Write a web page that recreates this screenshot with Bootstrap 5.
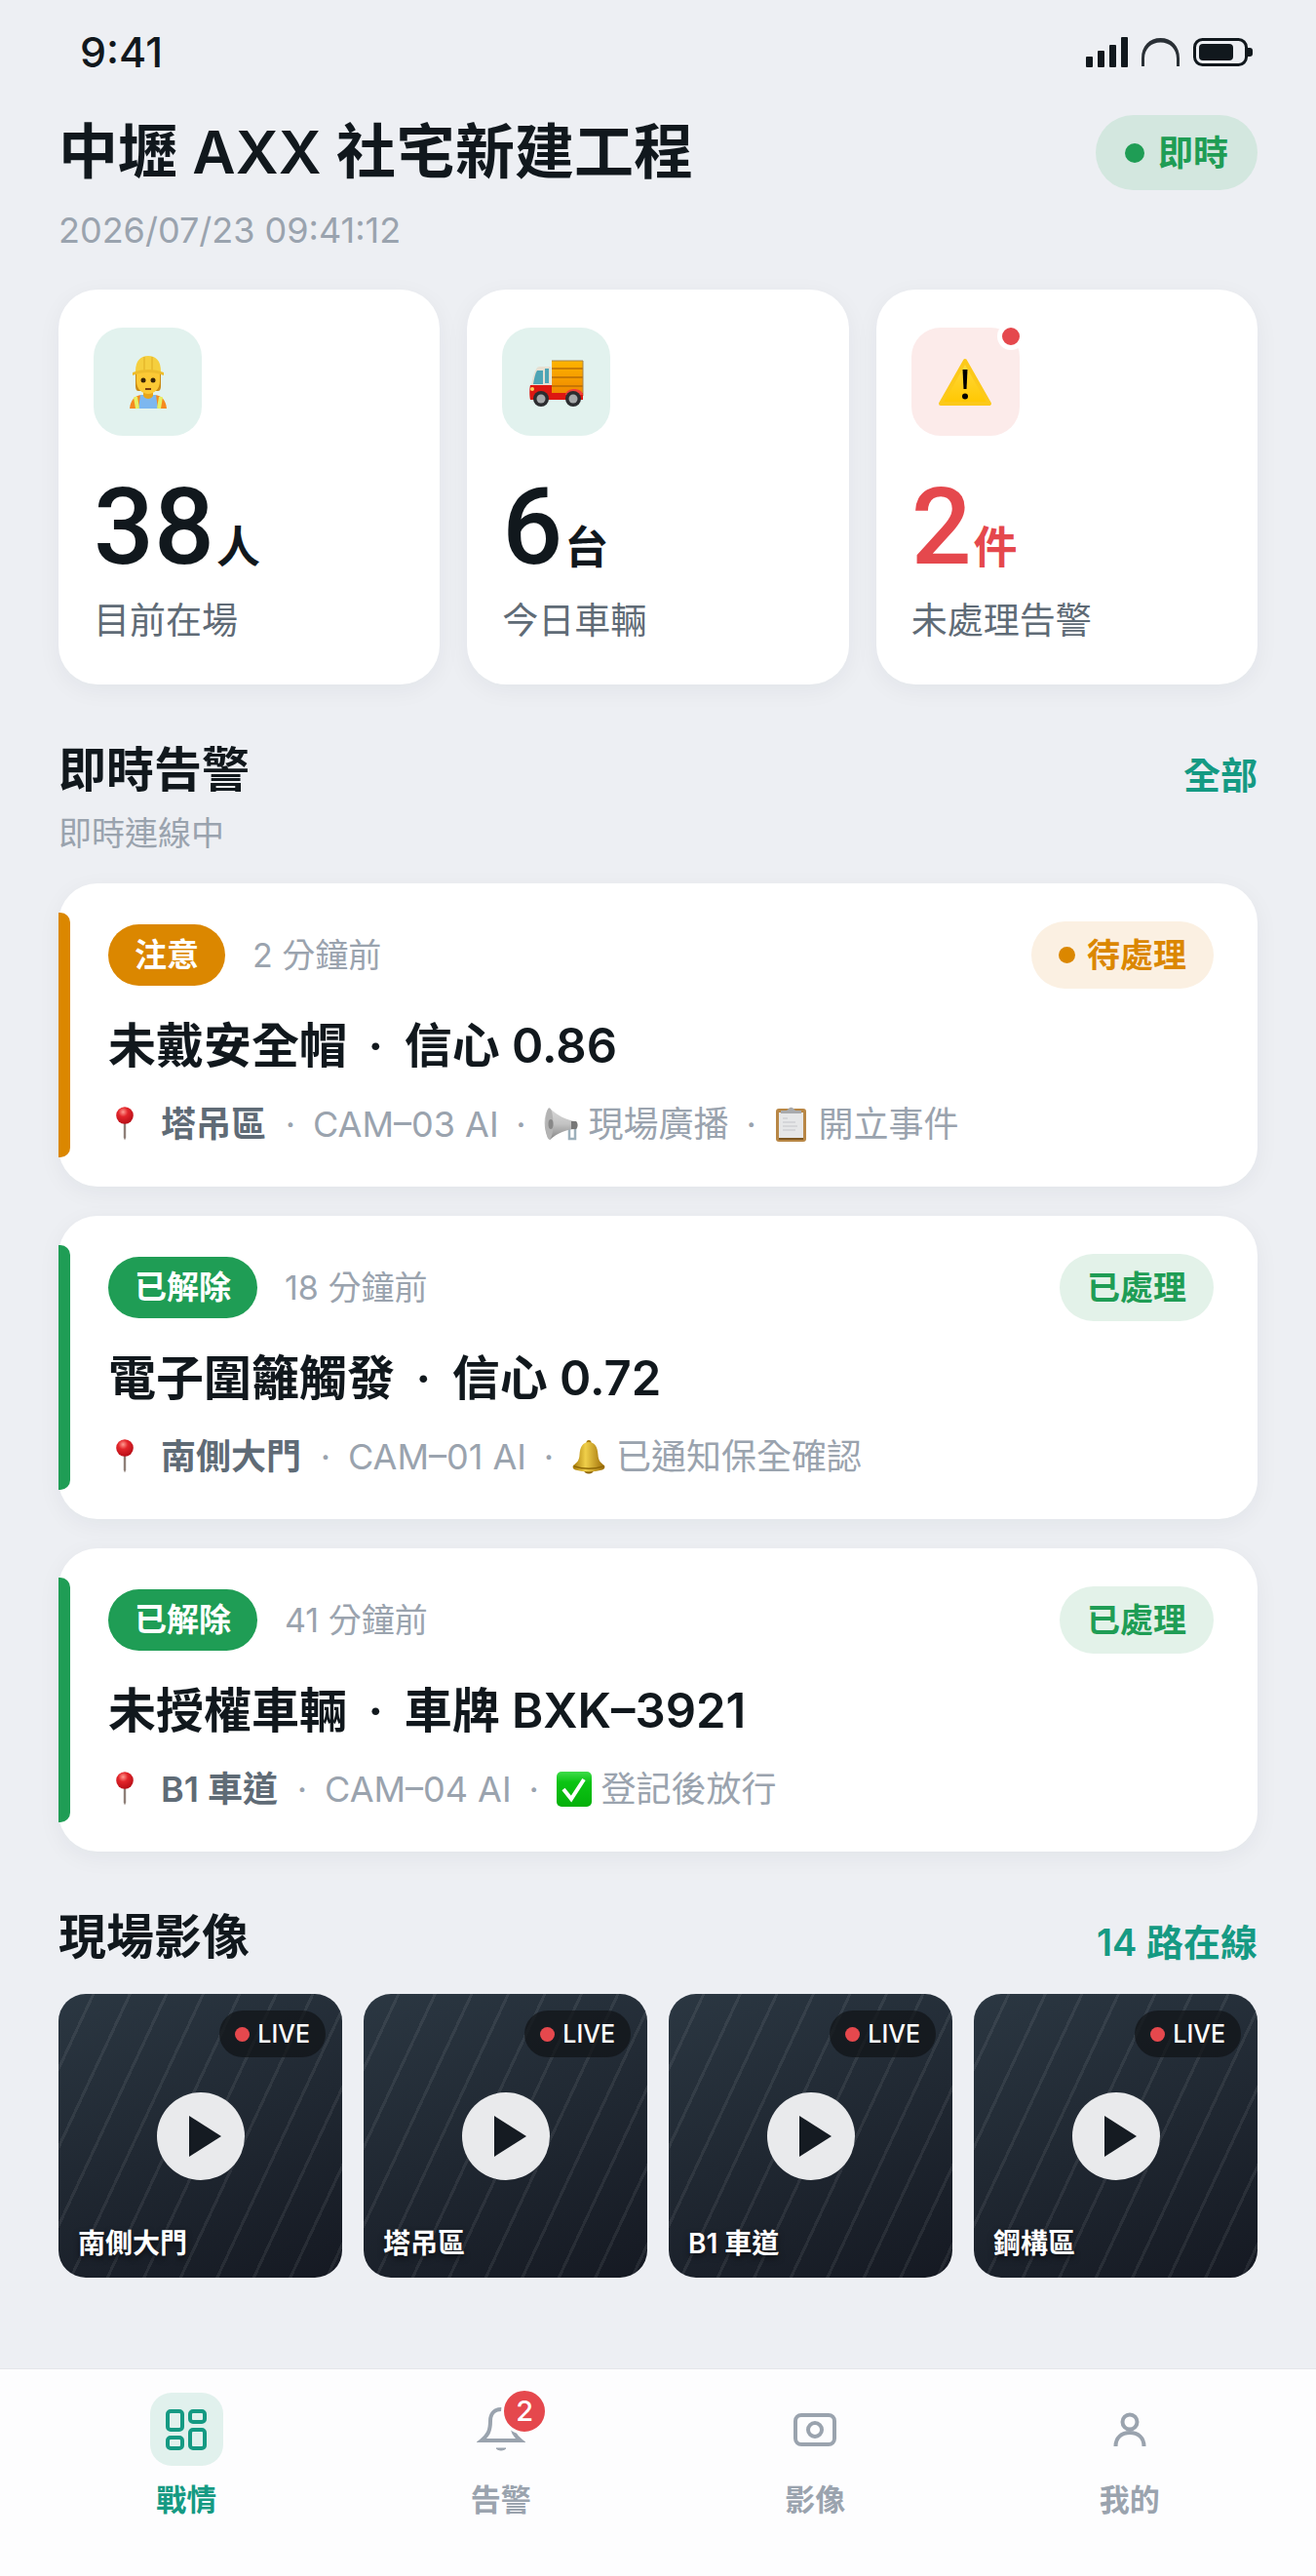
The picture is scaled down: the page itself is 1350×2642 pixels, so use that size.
<!DOCTYPE html>
<html lang="zh-Hant">
<head>
    <meta charset="UTF-8">
    <meta name="viewport" content="width=device-width, initial-scale=1.0">
    <title>中壢 AXX 社宅新建工程</title>
    <link href="https://cdn.jsdelivr.net/npm/bootstrap@5.3.0/dist/css/bootstrap.min.css" rel="stylesheet">
    <style>
        :root {
            --ink: #11181d;
            --slate: #5f6b76;
            --mist: #9aa3ae;
            --teal: #159a83;
            --green: #1f9d55;
            --amber: #db8700;
            --red: #e5484d;
        }
        body {
            font-family: Inter, "Noto Sans CJK TC", sans-serif;
            background: #edeff3;
            color: var(--ink);
            font-size: 34px;
            line-height: 50px;
        }
        a { text-decoration: none; }
        .page-pad { padding-left: 60px; padding-right: 60px; }

        /* status bar */
        .status-bar { padding: 24px 64px 0 82px; height: 102px; }
        .clock { font-size: 43px; line-height: 58px; font-weight: 500; }
        .status-icons { gap: 14px; height: 58px; }

        /* header */
        .site-title { font-size: 61px; line-height: 77px; font-weight: 600; }
        .site-time { font-size: 36px; color: var(--mist); }
        .live-pill {
            height: 77px; padding: 0 30px; gap: 14px;
            font-size: 36px; font-weight: 600;
            color: var(--green); background: #d3e7df;
        }
        .bullet { width: 17px; height: 17px; border-radius: 50%; background: currentColor; flex: none; }
        .live-pill .bullet { width: 20px; height: 20px; }

        /* stat cards */
        .stat-grid, .cam-grid { display: grid; }
        .stat-grid { grid-template-columns: repeat(3, 1fr); gap: 28px; margin-top: 36px; }
        .panel { background: #fff; border-radius: 40px; box-shadow: 0 6px 24px rgba(20, 30, 50, .05); }
        .stat { padding: 39px 36px 40px; }
        .stat-icon { width: 111px; height: 111px; border-radius: 30px; background: #e2f2ee; }
        .stat-icon.danger { background: #fcebea; }
        .stat-icon svg { width: 58px; height: 58px; }
        .alert-dot {
            top: -5px; right: -5px; width: 28px; height: 28px;
            border: 5px solid #fff; border-radius: 50%; background: var(--red);
        }
        .stat-value {
            height: 108px; margin-top: 40px; gap: 2px;
            font-family: Roboto, "Noto Sans CJK TC", sans-serif;
            font-size: 109px; line-height: 108px; font-weight: 500;
        }
        .stat-value small { font-size: 45px; line-height: 50px; font-weight: 600; }
        .stat-value.danger { color: var(--red); }
        .stat-label { margin-top: 17px; font-size: 37px; color: var(--slate); }

        /* sections */
        .section-head { margin-top: 58px; }
        .section-title { font-size: 49px; line-height: 60px; font-weight: 600; }
        .section-link { margin-top: 10px; font-size: 38px; font-weight: 600; color: var(--teal); }
        .section-note { margin-top: 10px; color: var(--mist); }
        .muted { color: var(--mist); }

        /* alert cards */
        .alarm-list { gap: 30px; margin-top: 26px; }
        .alarm { padding: 39px 45px 39px 51px; --tone: var(--green); --tint: #e3f2e9; }
        .alarm.warn { --tone: var(--amber); --tint: #fbf0e2; }
        .alarm::before {
            content: ""; position: absolute; left: 0; top: 30px; bottom: 30px;
            width: 12px; border-radius: 0 10px 10px 0; background: var(--tone);
        }
        .alarm-top { height: 69px; gap: 28px; }
        .tag { height: 63px; padding: 0 27px; font-size: 33px; line-height: 63px; font-weight: 600; color: #fff; background: var(--tone); }
        .state { height: 69px; padding: 0 28px; gap: 12px; font-weight: 600; color: var(--tone); background: var(--tint); }
        .alarm-title { margin-top: 24px; font-size: 49px; line-height: 70px; font-weight: 600; }
        .sep { display: inline-block; width: 34px; text-align: center; }
        .alarm-meta { margin-top: 20px; gap: 10px; font-size: 36px; color: var(--mist); }
        .alarm-meta strong { font-weight: 600; color: var(--slate); margin-right: 2px; }
        .alarm-meta .sep { width: 26px; }
        .alarm-meta svg { width: 36px; height: 36px; }
        .alarm-meta svg.pin { width: 44px; }

        /* cameras */
        .cam-grid { grid-template-columns: repeat(4, 1fr); gap: 22px; margin-top: 28px; }
        .cam {
            aspect-ratio: 1; border-radius: 28px; color: #fff;
            background:
                repeating-linear-gradient(115deg, transparent 0 31px, rgba(255, 255, 255, .07) 31px 34px),
                linear-gradient(160deg, #2b3742, #151922);
        }
        .cam-live {
            top: 17px; right: 17px; height: 48px; padding: 0 16px; gap: 8px;
            font-size: 25px; font-weight: 500; background: rgba(15, 18, 22, .7);
        }
        .cam-live .bullet { width: 15px; height: 15px; color: var(--red); }
        .cam-play { width: 90px; height: 90px; background: #e9eaec; }
        .cam-name { left: 20px; bottom: 15px; font-size: 28px; line-height: 40px; font-weight: 600; text-shadow: 0 3px 6px rgba(0, 0, 0, .6); }

        /* tab bar */
        .tabs { height: 213px; padding: 24px 30px 0; background: #fdfdfe; border-top: 1px solid #e4e6ea; }
        .tab { color: var(--mist); font-size: 31px; font-weight: 600; gap: 10px; }
        .tab.active { color: var(--teal); }
        .tab-icon { width: 75px; height: 75px; border-radius: 22px; }
        .tab.active .tab-icon { background: #e1f1ed; }
        .tab-count {
            top: -5px; right: -11px; width: 48px; height: 48px;
            border: 3px solid #fdfdfe; border-radius: 50%;
            background: var(--red); color: #fff; font-size: 29px; font-weight: 500; line-height: 42px; text-align: center;
        }
    </style>
</head>
<body class="d-flex flex-column min-vh-100">

    <!-- shared icons -->
    <svg class="position-absolute" width="0" height="0" aria-hidden="true">
        <defs>
            <linearGradient id="gold" x1="0" x2="1"><stop offset="0" stop-color="#a77a08"/><stop offset=".4" stop-color="#f0cf4a"/><stop offset="1" stop-color="#9a6a05"/></linearGradient>
            <linearGradient id="leaf" x1="0" x2="0" y1="0" y2="1"><stop offset="0" stop-color="#3fdc4a"/><stop offset=".3" stop-color="#0cc414"/><stop offset="1" stop-color="#04b00a"/></linearGradient>
            <linearGradient id="horn" x1="0" x2="0" y1="0" y2="1"><stop offset="0" stop-color="#d9d9d9"/><stop offset=".5" stop-color="#c4c4c4"/><stop offset="1" stop-color="#858585"/></linearGradient>
            <linearGradient id="sun" x1="0" x2="0" y1="0" y2="1"><stop offset="0" stop-color="#ffdb43"/><stop offset="1" stop-color="#ffc700"/></linearGradient>
            <linearGradient id="crate" x1="0" x2="0" y1="0" y2="1"><stop offset="0" stop-color="#fdb400"/><stop offset="1" stop-color="#ee8500"/></linearGradient>
            <radialGradient id="ball" cx=".4" cy=".3" r=".7"><stop offset="0" stop-color="#ff9a90"/><stop offset=".4" stop-color="#e3262b"/><stop offset="1" stop-color="#b80e17"/></radialGradient>
        </defs>
        <symbol id="i-pin" viewBox="0 0 44 36">
            <path d="M15.800 15h2.400v16.500l-1.200 3-1.200-3z" fill="#8e7f78"/>
            <circle cx="17" cy="9" r="8.800" fill="url(#ball)"/>
        </symbol>
        <symbol id="i-horn" viewBox="0 0 36 36">
            <path d="M26 20v13h6V19" fill="none" stroke="#9db0bb" stroke-width="2.500"/>
            <path d="M5 1C14 9 23 14 33 15c2 2 2 6 0 8-10 0-19 4-27 11C-1 25-1 9 5 1z" fill="url(#horn)"/>
            <path d="M28 15l5 0c2 2 2 6 0 8h-5z" fill="#777"/>
            <ellipse cx="5.500" cy="17.500" rx="4" ry="16" fill="#b3b3b3"/>
            <ellipse cx="7" cy="18" rx="2.500" ry="5" fill="#888"/>
        </symbol>
        <symbol id="i-board" viewBox="0 0 36 36">
            <rect x="2" y="2" width="31" height="34" rx="3" fill="#b88746"/>
            <rect x="5" y="6" width="25" height="26" fill="#e6e7e8"/>
            <path d="M9 12h5M9 16h13M9 20h15M9 24h13" stroke="#cfd1d4" stroke-width="1.500"/>
            <path d="M7 7V4h6l2-2a3 3 0 0 1 5 0l2 2h6v3z" fill="#a8aaad"/>
            <path d="M5 32h25v2H5z" fill="#7d5722"/>
        </symbol>
        <symbol id="i-bell" viewBox="0 0 36 36">
            <circle cx="18" cy="3.500" r="2.500" fill="#a87c0c"/>
            <ellipse cx="18" cy="32" rx="5" ry="3.500" fill="#8e6406"/>
            <path d="M18 3c6 0 9 5 9.500 13 .3 6 2.500 8 6.500 11 1 1.500 0 4-2 4.500C23 34 13 34 4 31.500c-2-.5-3-3-2-4.500 4-3 6.200-5 6.500-11C9 8 12 3 18 3z" fill="url(#gold)"/>
            <path d="M3 28c10 3 20 3 30 0" fill="none" stroke="#8f6808" stroke-width="1.500"/>
        </symbol>
        <symbol id="i-check" viewBox="0 0 36 36">
            <rect width="36" height="36" rx="5" fill="url(#leaf)"/>
            <path d="M7 18l8 10L28 8" fill="none" stroke="#fff" stroke-width="4"/>
        </symbol>
        <symbol id="i-play" viewBox="0 0 90 90">
            <path d="M33 24v42l33-21z" fill="#151b22"/>
        </symbol>
    </svg>

    <div class="status-bar d-flex justify-content-between align-items-start">
        <span class="clock">9:41</span>
        <div class="status-icons d-flex align-items-center">
            <svg width="44" height="31" viewBox="0 0 44 31" fill="#11181d" aria-hidden="true">
                <rect x="1" y="20" width="7" height="11" rx="1"/><rect x="13" y="14" width="7" height="17" rx="1"/>
                <rect x="25" y="8" width="7" height="23" rx="1"/><rect x="37" y="0" width="7" height="31" rx="1"/>
            </svg>
            <svg width="39" height="29" viewBox="0 0 39 29" aria-hidden="true">
                <path d="M0 29V21C0 8 8 0 19.500 0S39 8 39 21v8h-3v-8C36 11 29 4.500 19.500 4.500S3 11 3 21v8z" fill="#2a3036"/>
            </svg>
            <svg width="62" height="29" viewBox="0 0 62 29" aria-hidden="true">
                <rect x="1.500" y="1.500" width="53" height="26" rx="8" fill="none" stroke="#11181d" stroke-width="3"/>
                <rect x="6" y="6" width="35" height="17" rx="4" fill="#11181d"/>
                <path d="M56 10h2a3 3 0 0 1 3 3v3a3 3 0 0 1-3 3h-2z" fill="#11181d"/>
            </svg>
        </div>
    </div>

    <main class="page-pad">
        <header class="d-flex justify-content-between align-items-start mt-3">
            <div>
                <h1 class="site-title mb-0">中壢 AXX 社宅新建工程</h1>
                <time class="site-time d-block mt-3">2026/07/23 09:41:12</time>
            </div>
            <span class="live-pill rounded-pill d-flex align-items-center"><span class="bullet"></span>即時</span>
        </header>

        <section class="stat-grid">
            <div class="panel stat">
                <div class="stat-icon d-flex align-items-center justify-content-center">
                    <svg viewBox="0 0 58 58" aria-hidden="true">
                        <path d="M10 56c1-9 5-13 12-14h14c7 1 11 5 12 14z" fill="#f58a1f"/>
                        <path d="M21 42h16l2 14H19z" fill="#7db7ef"/>
                        <path d="M16 44l2 12M42 44l-2 12" stroke="#e8ef62" stroke-width="4"/>
                        <path d="M24 36h10v7c-2 4-8 4-10 0z" fill="#e9a61a"/>
                        <path d="M16 18h26v15c0 3-1 5-3 5H19c-2 0-3-2-3-5z" fill="#c98a14"/>
                        <path d="M17 18h24v10c0 8-6 13-12 13s-12-5-12-13z" fill="#fcc935"/>
                        <circle cx="24" cy="27" r="2.500" fill="#3a2508"/><circle cx="34" cy="27" r="2.500" fill="#3a2508"/>
                        <path d="M26 36h6" stroke="#7a3f10" stroke-width="2"/>
                        <path d="M16 18C16 7 21 2 29 2s13 5 13 16z" fill="#f5cf3e"/>
                        <path d="M25 3v14M33 3v14" stroke="#e6b92c" stroke-width="1.500"/>
                        <path d="M13 19c10-4 22-4 32 0v3c-10-4-22-4-32 0z" fill="#eebd2c"/>
                    </svg>
                </div>
                <div class="stat-value d-flex align-items-baseline">38<small>人</small></div>
                <div class="stat-label">目前在場</div>
            </div>
            <div class="panel stat">
                <div class="stat-icon d-flex align-items-center justify-content-center">
                    <svg viewBox="0 0 58 58" aria-hidden="true">
                        <path d="M24 7h32v36H24z" fill="url(#crate)"/>
                        <path d="M24 15h32M24 24h32M24 33h32" stroke="#b96d05" stroke-width="1.500"/>
                        <path d="M24 7h32v36" fill="none" stroke="#a8834a" stroke-width="1"/>
                        <path d="M9 14c1-1 2-1 3-1h11v20H3c1-8 3-15 6-19z" fill="#e6e0d2"/>
                        <path d="M9 17h6v14H5c1-6 2-11 4-14zM17 15h4v15h-4z" fill="#4ea5b5"/>
                        <path d="M2 32h22v8h32v7H2c-1-3-1-12 0-15z" fill="#dd1712"/>
                        <path d="M38 42c1-8 17-8 18 0z" fill="#f0413a"/>
                        <circle cx="13" cy="46" r="8" fill="#2c2d30"/><circle cx="13" cy="46" r="4.500" fill="#a6a8aa"/>
                        <circle cx="46" cy="46" r="8" fill="#2c2d30"/><circle cx="46" cy="46" r="4.500" fill="#a6a8aa"/>
                        <circle cx="4" cy="36" r="2" fill="#ffcf5a"/>
                    </svg>
                </div>
                <div class="stat-value d-flex align-items-baseline">6<small>台</small></div>
                <div class="stat-label">今日車輛</div>
            </div>
            <div class="panel stat">
                <div class="stat-icon danger position-relative d-flex align-items-center justify-content-center">
                    <svg viewBox="0 0 58 58" aria-hidden="true">
                        <path d="M29 7L54 51H4z" fill="url(#sun)" stroke="#fcc91a" stroke-width="4" stroke-linejoin="round"/>
                        <path d="M26.500 16h5l-1 20h-3z"/><circle cx="29" cy="43.500" r="3"/>
                    </svg>
                    <span class="alert-dot position-absolute"></span>
                </div>
                <div class="stat-value danger d-flex align-items-baseline">2<small>件</small></div>
                <div class="stat-label">未處理告警</div>
            </div>
        </section>

        <div class="section-head d-flex justify-content-between">
            <div>
                <h2 class="section-title mb-0">即時告警</h2>
                <div class="section-note">即時連線中</div>
            </div>
            <a class="section-link" href="#">全部</a>
        </div>

        <section class="alarm-list d-grid">
            <article class="panel alarm warn position-relative">
                <div class="alarm-top d-flex align-items-center">
                    <span class="tag rounded-pill">注意</span>
                    <span class="muted">2 分鐘前</span>
                    <span class="state rounded-pill d-flex align-items-center ms-auto"><span class="bullet"></span>待處理</span>
                </div>
                <h3 class="alarm-title mb-0">未戴安全帽 <span class="sep">·</span> 信心 0.86</h3>
                <div class="alarm-meta d-flex align-items-center">
                    <svg class="pin" aria-hidden="true"><use href="#i-pin"/></svg>
                    <strong>塔吊區</strong><span class="sep">·</span><span>CAM–03 AI</span><span class="sep">·</span>
                    <svg aria-hidden="true"><use href="#i-horn"/></svg><span>現場廣播</span><span class="sep">·</span>
                    <svg aria-hidden="true"><use href="#i-board"/></svg><span>開立事件</span>
                </div>
            </article>
            <article class="panel alarm position-relative">
                <div class="alarm-top d-flex align-items-center">
                    <span class="tag rounded-pill">已解除</span>
                    <span class="muted">18 分鐘前</span>
                    <span class="state rounded-pill d-flex align-items-center ms-auto">已處理</span>
                </div>
                <h3 class="alarm-title mb-0">電子圍籬觸發 <span class="sep">·</span> 信心 0.72</h3>
                <div class="alarm-meta d-flex align-items-center">
                    <svg class="pin" aria-hidden="true"><use href="#i-pin"/></svg>
                    <strong>南側大門</strong><span class="sep">·</span><span>CAM–01 AI</span><span class="sep">·</span>
                    <svg aria-hidden="true"><use href="#i-bell"/></svg><span>已通知保全確認</span>
                </div>
            </article>
            <article class="panel alarm position-relative">
                <div class="alarm-top d-flex align-items-center">
                    <span class="tag rounded-pill">已解除</span>
                    <span class="muted">41 分鐘前</span>
                    <span class="state rounded-pill d-flex align-items-center ms-auto">已處理</span>
                </div>
                <h3 class="alarm-title mb-0">未授權車輛 <span class="sep">·</span> 車牌 BXK–3921</h3>
                <div class="alarm-meta d-flex align-items-center">
                    <svg class="pin" aria-hidden="true"><use href="#i-pin"/></svg>
                    <strong>B1 車道</strong><span class="sep">·</span><span>CAM–04 AI</span><span class="sep">·</span>
                    <svg aria-hidden="true"><use href="#i-check"/></svg><span>登記後放行</span>
                </div>
            </article>
        </section>

        <div class="section-head d-flex justify-content-between">
            <h2 class="section-title mb-0">現場影像</h2>
            <a class="section-link" href="#">14 路在線</a>
        </div>

        <section class="cam-grid">
            <div class="cam position-relative d-flex align-items-center justify-content-center">
                <span class="cam-live position-absolute rounded-pill d-flex align-items-center"><span class="bullet"></span>LIVE</span>
                <button class="cam-play btn p-0 border-0 rounded-circle" type="button" aria-label="播放南側大門"><svg width="90" height="90"><use href="#i-play"/></svg></button>
                <span class="cam-name position-absolute">南側大門</span>
            </div>
            <div class="cam position-relative d-flex align-items-center justify-content-center">
                <span class="cam-live position-absolute rounded-pill d-flex align-items-center"><span class="bullet"></span>LIVE</span>
                <button class="cam-play btn p-0 border-0 rounded-circle" type="button" aria-label="播放塔吊區"><svg width="90" height="90"><use href="#i-play"/></svg></button>
                <span class="cam-name position-absolute">塔吊區</span>
            </div>
            <div class="cam position-relative d-flex align-items-center justify-content-center">
                <span class="cam-live position-absolute rounded-pill d-flex align-items-center"><span class="bullet"></span>LIVE</span>
                <button class="cam-play btn p-0 border-0 rounded-circle" type="button" aria-label="播放 B1 車道"><svg width="90" height="90"><use href="#i-play"/></svg></button>
                <span class="cam-name position-absolute">B1 車道</span>
            </div>
            <div class="cam position-relative d-flex align-items-center justify-content-center">
                <span class="cam-live position-absolute rounded-pill d-flex align-items-center"><span class="bullet"></span>LIVE</span>
                <button class="cam-play btn p-0 border-0 rounded-circle" type="button" aria-label="播放鋼構區"><svg width="90" height="90"><use href="#i-play"/></svg></button>
                <span class="cam-name position-absolute">鋼構區</span>
            </div>
        </section>
    </main>

    <nav class="tabs d-flex mt-auto">
        <a class="tab active flex-fill w-25 d-flex flex-column align-items-center" href="#">
            <span class="tab-icon d-flex align-items-center justify-content-center">
                <svg width="42" height="42" viewBox="0 0 42 42" fill="none" stroke="currentColor" stroke-width="4">
                    <rect x="2" y="2" width="15" height="19" rx="3"/><rect x="25" y="2" width="15" height="11" rx="3"/>
                    <rect x="2" y="29" width="15" height="11" rx="3"/><rect x="25" y="21" width="15" height="19" rx="3"/>
                </svg>
            </span>
            戰情
        </a>
        <a class="tab flex-fill w-25 d-flex flex-column align-items-center" href="#">
            <span class="tab-icon position-relative d-flex align-items-center justify-content-center">
                <svg width="50" height="50" viewBox="0 0 50 50" fill="none" stroke="currentColor" stroke-width="4">
                    <path d="M25 4c-7 0-11 5-11 12 0 11-3 15-9 20h40c-6-5-9-9-9-20 0-7-4-12-11-12z"/>
                    <path d="M20 44c1 1 3 2 5 2s4-1 5-2z" fill="currentColor" stroke-width="1"/>
                </svg>
                <span class="tab-count position-absolute">2</span>
            </span>
            告警
        </a>
        <a class="tab flex-fill w-25 d-flex flex-column align-items-center" href="#">
            <span class="tab-icon d-flex align-items-center justify-content-center">
                <svg width="44" height="34" viewBox="0 0 44 34" fill="none" stroke="currentColor" stroke-width="4">
                    <rect x="2" y="2" width="40" height="30" rx="6"/><circle cx="22" cy="17" r="7"/>
                </svg>
            </span>
            影像
        </a>
        <a class="tab flex-fill w-25 d-flex flex-column align-items-center" href="#">
            <span class="tab-icon d-flex align-items-center justify-content-center">
                <svg width="34" height="35" viewBox="0 0 34 35" fill="none" stroke="currentColor" stroke-width="4">
                    <circle cx="17" cy="10" r="7.500"/><path d="M2.500 35c0-9 6-14 14.500-14s14.500 5 14.500 14"/>
                </svg>
            </span>
            我的
        </a>
    </nav>

    <script src="https://cdn.jsdelivr.net/npm/bootstrap@5.3.0/dist/js/bootstrap.bundle.min.js"></script>
</body>
</html>
